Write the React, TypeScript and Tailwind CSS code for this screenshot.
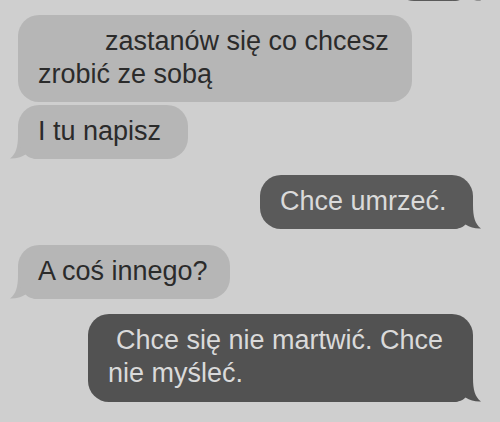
import React from 'react';

type Side = 'in' | 'out';

function Tail({ side, color }: { side: Side; color: string }) {
  // iOS 7 style bubble tail, drawn for the left side and mirrored for the right
  return (
    <svg
      width="32"
      height="24"
      viewBox="0 0 32 24"
      className={side === 'in' ? 'absolute -left-[8px] bottom-0' : 'absolute -right-[8px] bottom-0 -scale-x-100'}
    >
      <path
        d="M8 0 C8 12 6 19 0 23.5 C6 23.8 11 22.3 15.5 19.5 C18.5 22.3 22 24 28 24 L28 0 Z"
        fill={color}
      />
    </svg>
  );
}

function Bubble({
  side,
  width,
  lines,
  dark = '#5a5a5a',
  pb = 'pb-[11px]',
  tail = true,
}: {
  side: Side;
  width: string;
  lines: { text: string; indent?: string }[];
  dark?: string;
  pb?: string;
  tail?: boolean;
}) {
  const isIn = side === 'in';
  const color = isIn ? '#b6b6b6' : dark;
  return (
    <div className={`relative ${width} ${isIn ? 'self-start' : 'self-end'}`}>
      {tail && <Tail side={side} color={color} />}
      <div
        className={`relative rounded-[21px] pl-[20px] pr-[18px] pt-[10px] ${pb} text-[27px] leading-[33px] whitespace-nowrap ${
          isIn ? 'text-[#2b2b2b]' : 'text-[#dadada]'
        }`}
        style={{ backgroundColor: color }}
      >
        {lines.map((l, i) => (
          <div key={i} className={l.indent}>
            {l.text}
          </div>
        ))}
      </div>
    </div>
  );
}

export default function App() {
  return (
    <div
      className="w-[500px] h-[422px] overflow-hidden bg-[#cfcfcf] pl-[18px] pr-[27px] flex flex-col"
      style={{ fontFamily: '"Liberation Sans", Arial, sans-serif' }}
    >
      {/* bottom edge of the previous message, cut off by the top of the screen */}
      <div className="relative w-[80px] h-[54px] -mt-[53px] self-end">
        <Tail side="out" color="#5a5a5a" />
        <div className="h-full rounded-[21px] bg-[#5a5a5a]" />
      </div>

      <div className="mt-[14px] flex flex-col">
        <Bubble
          side="in"
          width="w-[394px]"
          tail={false}
          lines={[
            { text: 'zastanów się co chcesz', indent: 'pl-[67px]' },
            { text: 'zrobić ze sobą' },
          ]}
        />
      </div>

      <div className="mt-[3px] flex flex-col">
        <Bubble side="in" width="w-[170px]" lines={[{ text: 'I tu napisz' }]} />
      </div>

      <div className="mt-[16px] flex flex-col">
        <Bubble side="out" width="w-[213px]" lines={[{ text: 'Chce umrzeć.' }]} />
      </div>

      <div className="mt-[16px] flex flex-col">
        <Bubble side="in" width="w-[212px]" lines={[{ text: 'A coś innego?' }]} />
      </div>

      <div className="mt-[15px] flex flex-col">
        <Bubble
          side="out"
          width="w-[385px]"
          dark="#525252"
          pb="pb-[12px]"
          lines={[
            { text: 'Chce się nie martwić. Chce', indent: 'pl-[8px]' },
            { text: 'nie myśleć.' },
          ]}
        />
      </div>
    </div>
  );
}
